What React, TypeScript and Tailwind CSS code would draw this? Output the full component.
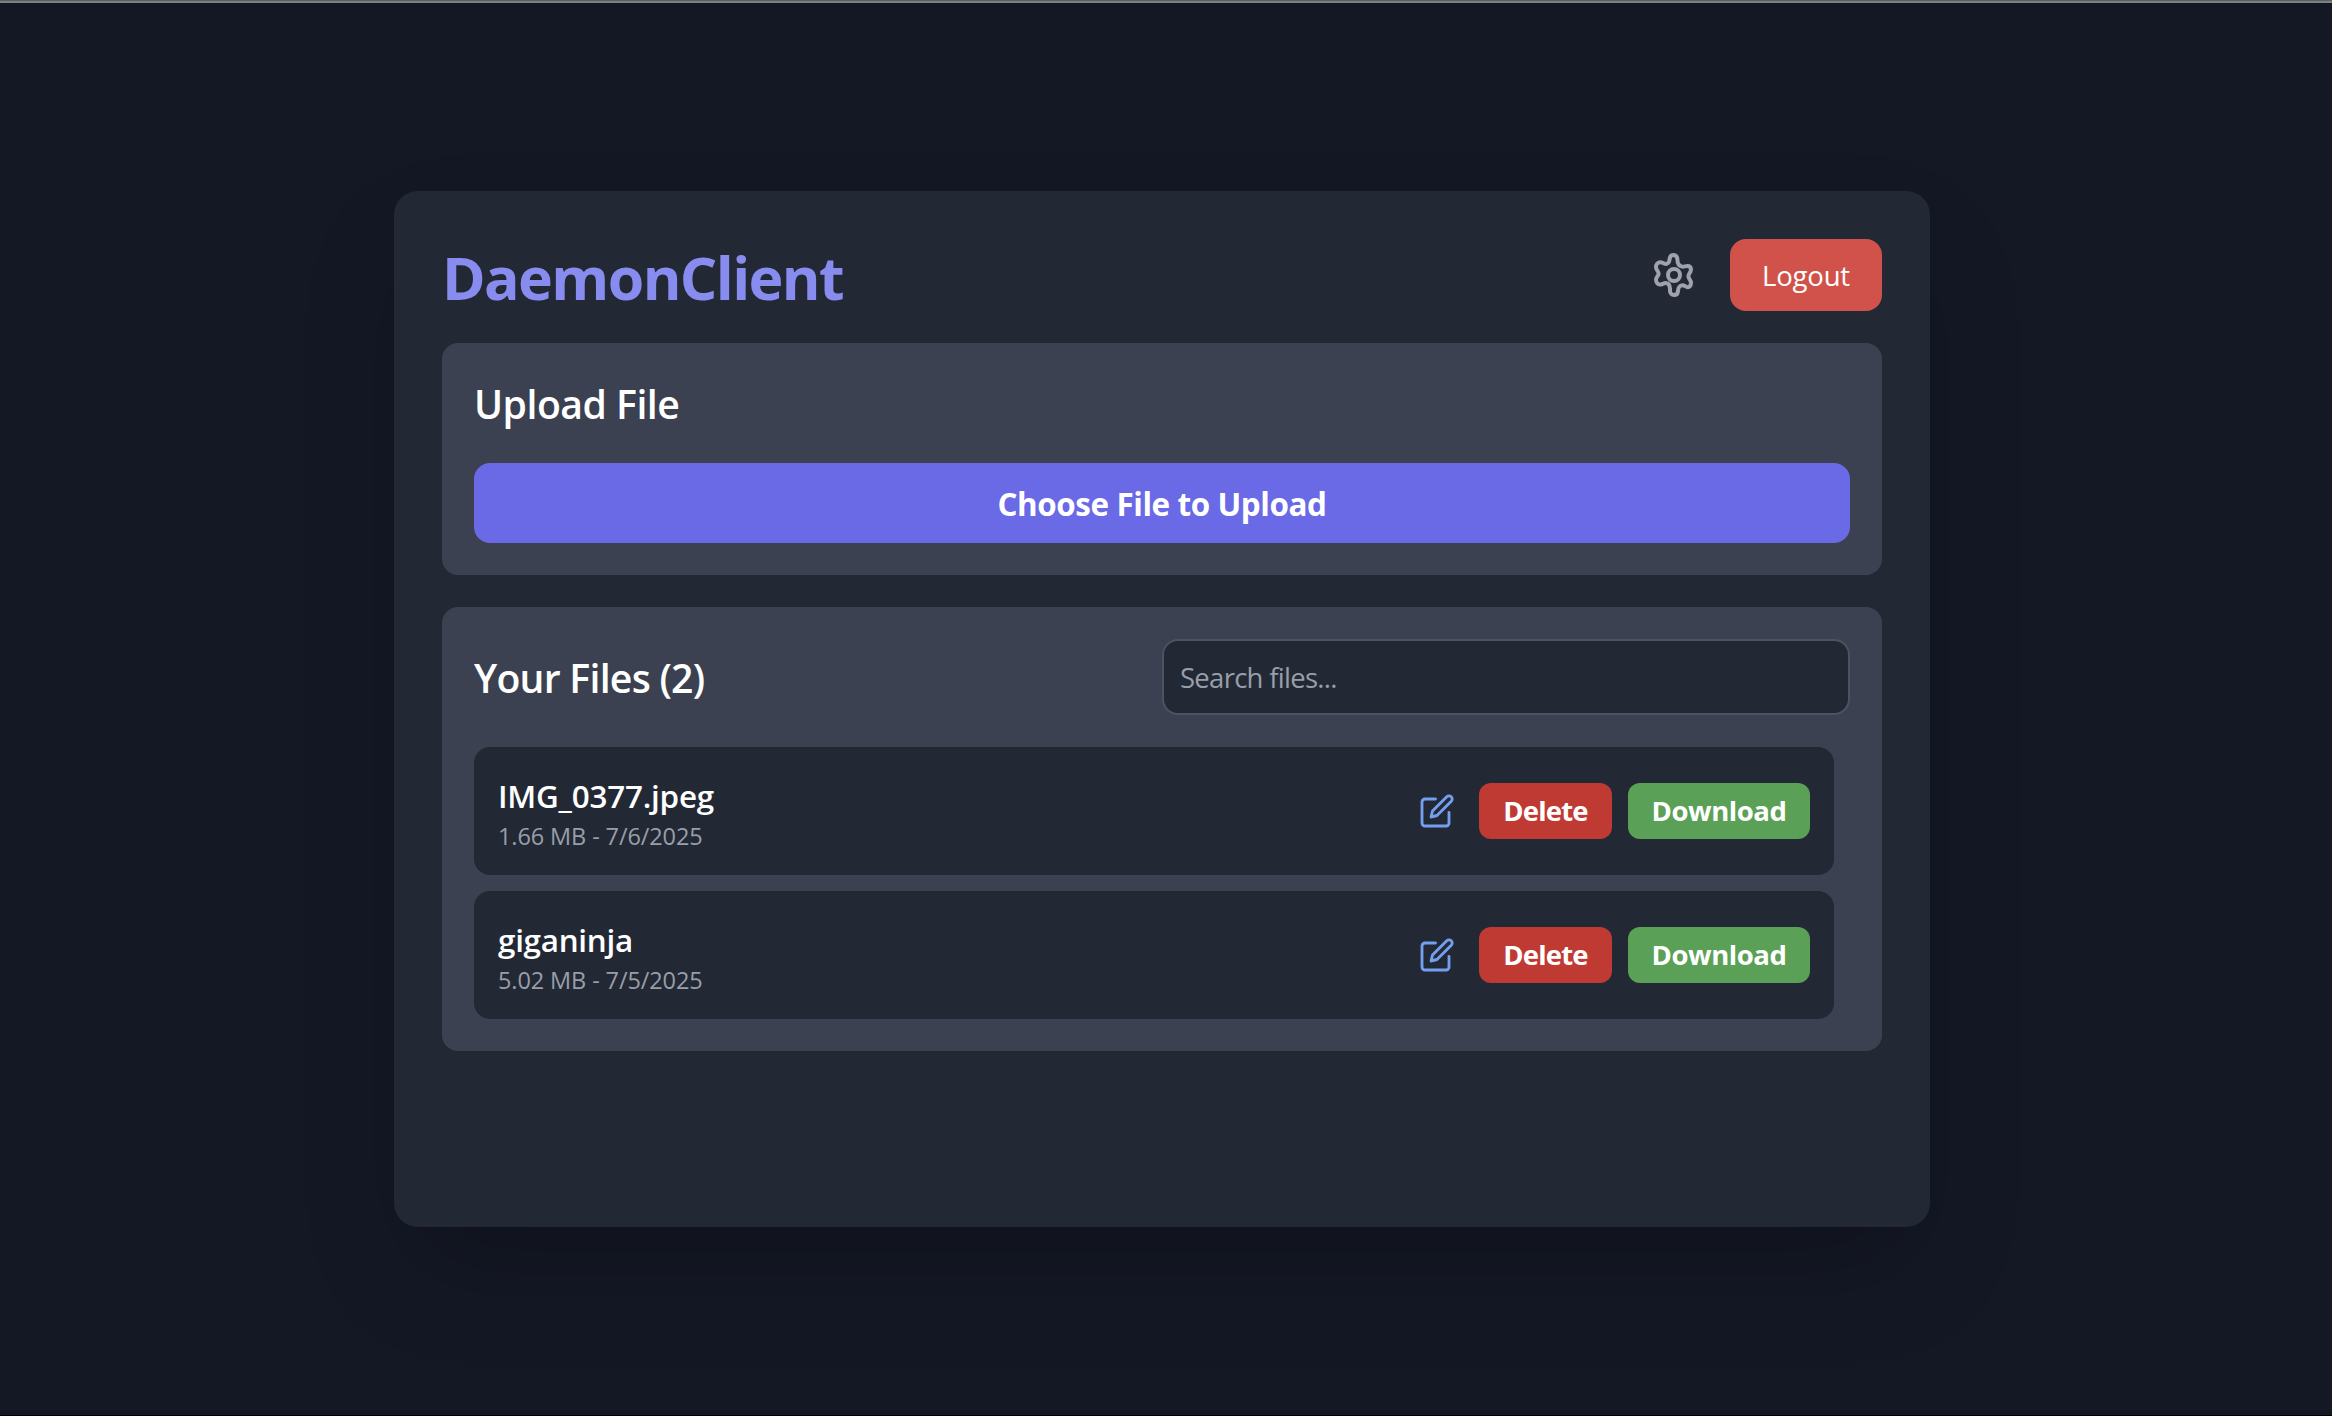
import React from "react";

type FileEntry = {
  name: string;
  meta: string;
  nameClass: string;
};

const files: FileEntry[] = [
  { name: "IMG_0377.jpeg", meta: "1.66 MB - 7/6/2025", nameClass: "tracking-[-0.22px]" },
  { name: "giganinja", meta: "5.02 MB - 7/5/2025", nameClass: "tracking-[-0.27px]" },
];

function GearIcon() {
  return (
    <svg
      className="size-12"
      viewBox="0 0 24 24"
      fill="none"
      stroke="currentColor"
      strokeWidth="2"
      strokeLinecap="round"
      strokeLinejoin="round"
    >
      <path d="M11.8 2C10.6 2 9.9 2.8 9.8 4C9.7 5.6 9 6.7 7.6 6.4C6.6 6.2 6 5.5 5 5.6C3.8 5.7 3 6.8 3 8.1C3 9.3 4.3 10.2 4.3 11.4C4.3 12.6 3 13 3 14.3C3 15.6 3.8 16.8 5 16.8C6 16.8 6.8 16 7.8 16C9.2 16 9.9 17.2 10 18.8V20C10 21.2 10.9 22 12 22C13.2 22 13.9 21.2 14 20C14 18.5 14.8 17.2 16.2 17.1C17.2 17 17.9 18.2 19 18.1C20 18 20.5 17 20.5 15.8C20.5 14.5 19.2 13.8 19.2 12.6C19.2 11.4 20.5 10.6 20.5 9.3C20.5 8.2 19.8 7.5 18.7 7.5C17.6 7.5 17 8 16 7.8C14.5 7.5 13.7 6 13.7 4.3C13.7 3 13 2 11.8 2Z" />
      <circle cx="12" cy="12" r="3" />
    </svg>
  );
}

function EditIcon() {
  return (
    <svg
      className="size-9"
      viewBox="0 0 24 24"
      fill="none"
      stroke="currentColor"
      strokeWidth="1.9"
      strokeLinecap="round"
      strokeLinejoin="round"
    >
      <path d="M11 4H4a2 2 0 0 0-2 2v14a2 2 0 0 0 2 2h14a2 2 0 0 0 2-2v-7" />
      <path d="M18.5 2.5a2.121 2.121 0 0 1 3 3L12 15l-4 1 1-4 9.5-9.5z" />
    </svg>
  );
}

function FileRow({ file }: { file: FileEntry }) {
  return (
    <li className="flex h-32 items-center justify-between rounded-2xl bg-[#222935] px-6">
      <div>
        <p className={`-mb-0.5 text-[31.4px] leading-[50px] font-semibold text-white ${file.nameClass}`}>
          {file.name}
        </p>
        <p className="-mb-0.5 text-[23.5px] leading-[34px] tracking-[-0.11px] text-[#999ea8]">{file.meta}</p>
      </div>
      <div className="flex items-center gap-4">
        <button className="p-2 text-[#749fee]" aria-label="Rename">
          <EditIcon />
        </button>
        <button className="h-14 w-[133px] rounded-xl bg-[#bf3a32] text-[27.5px] font-bold tracking-[-0.84px] text-white">
          Delete
        </button>
        <button className="h-14 w-[182px] rounded-xl bg-[#5aa157] text-[27.5px] font-bold tracking-[-0.43px] text-white">
          Download
        </button>
      </div>
    </li>
  );
}

export default function App() {
  return (
    <div className="flex h-[1416px] flex-col items-center overflow-hidden border-b border-black bg-[#141825] font-['Open_Sans',sans-serif]">
      <div className="h-[3px] w-full border-t border-[#5c5e61] bg-[#7e7f81]" />
      <main className="mt-[188px] mr-2 flex h-[1036px] w-[1536px] flex-col rounded-3xl bg-[#222935] p-12 shadow-[0_50px_100px_-24px_rgba(0,0,0,0.25)]">
        <header className="mb-8 flex h-[72px] items-center justify-between">
          <h1 className="pt-1 text-[59px] leading-none font-bold tracking-[-1.6px] text-[#898cef]">DaemonClient</h1>
          <div className="flex items-center gap-8">
            <button className="text-[#9fa2ad]" aria-label="Settings">
              <GearIcon />
            </button>
            <button className="h-[72px] w-[152px] rounded-2xl bg-[#d1524b] pt-px text-[27.5px] tracking-[-0.19px] text-white">
              Logout
            </button>
          </div>
        </header>

        <section className="mb-8 h-[232px] rounded-2xl bg-[#3b4150] p-8">
          <h2 className="mb-8 h-14 text-[39.2px] leading-[58px] font-semibold tracking-[-0.51px] text-white">
            Upload File
          </h2>
          <button className="h-20 w-full rounded-2xl bg-[#6a69e6] pt-0.5 text-[31.4px] font-bold tracking-[-0.4px] text-white">
            Choose File to Upload
          </button>
        </section>

        <section className="h-[444px] rounded-2xl bg-[#3b4150] p-8">
          <div className="mb-8 flex h-[76px] items-center justify-between">
            <h2 className="pt-0.5 text-[39.2px] leading-[56px] font-semibold tracking-[-0.75px] text-white">
              Your Files (2)
            </h2>
            <input
              type="text"
              placeholder="Search files..."
              className="h-[76px] w-[688px] rounded-2xl border-2 border-[#4c5362] bg-[#222935] px-4 text-[27.5px] tracking-[-0.72px] placeholder:text-[#999ea8]"
            />
          </div>
          <ul className="flex flex-col gap-4 pr-4">
            {files.map((file) => (
              <FileRow key={file.name} file={file} />
            ))}
          </ul>
        </section>
      </main>
    </div>
  );
}
